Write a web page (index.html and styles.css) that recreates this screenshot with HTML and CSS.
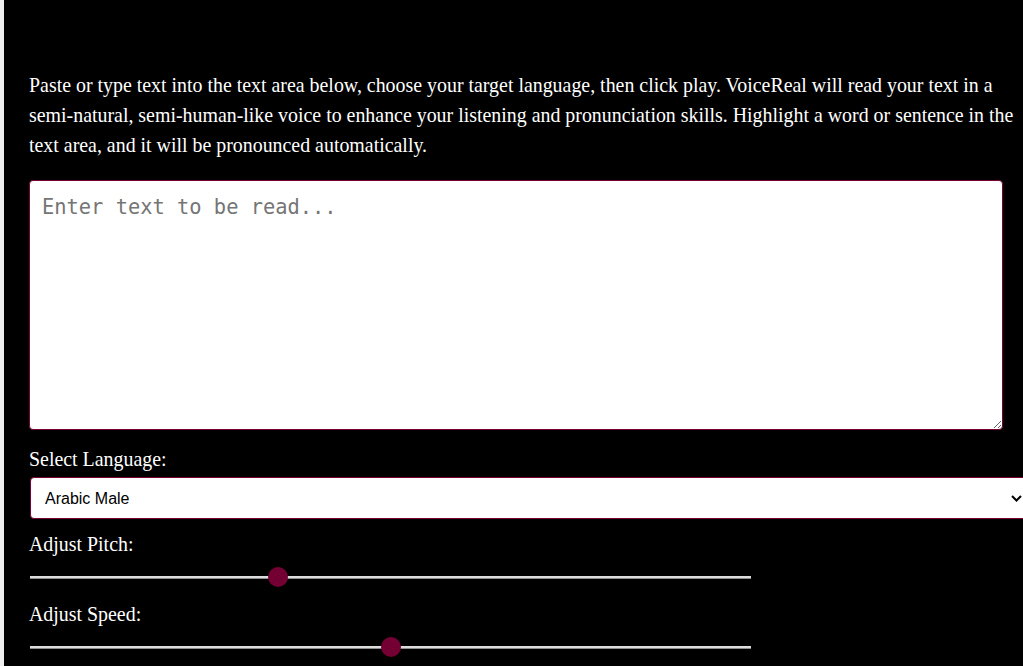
FILE: index.html
```html
<!DOCTYPE html>
<html lang="en">
<head>
<meta charset="utf-8">
<title>VoiceReal</title>
<link rel="stylesheet" href="styles.css">
</head>
<body>
<main class="page">
  <p class="intro">Paste or type text into the text area below, choose your target language, then click play. VoiceReal will read your text in a semi-natural, semi-human-like voice to enhance your listening and pronunciation skills. Highlight a word or sentence in the text area, and it will be pronounced automatically.</p>
  <textarea class="text-input" placeholder="Enter text to be read..."></textarea>
  <label class="field-label" for="lang">Select Language:</label>
  <div class="select-wrap">
    <select id="lang" class="lang-select">
      <option>Arabic Male</option>
      <option>Arabic Female</option>
    </select>
    <svg class="chevron" width="11" height="7" viewBox="0 0 11 7"><path d="M1 1 L5.5 5.5 L10 1" fill="none" stroke="#000" stroke-width="2"/></svg>
  </div>
  <label class="field-label" for="pitch">Adjust Pitch:</label>
  <input id="pitch" class="slider slider-pitch" type="range" min="0" max="100" value="34">
  <label class="field-label" for="speed">Adjust Speed:</label>
  <input id="speed" class="slider slider-speed" type="range" min="0" max="100" value="50">
</main>
</body>
</html>
```
FILE: styles.css
```css
html, body {
  margin: 0;
  padding: 0;
  height: 100%;
  overflow: hidden;
}
body {
  background: #f0f0f0;
}
.page {
  margin-left: 4px;
  width: 1040px;
  min-height: 100%;
  background: #000;
  padding: 70px 0 0 25px;
  box-sizing: border-box;
  font-family: "Liberation Serif", "Times New Roman", serif;
  color: #fff;
}
.intro {
  margin: 0 0 20px 0;
  width: 1000px;
  font-size: 19.9px;
  line-height: 30px;
}
.text-input {
  display: block;
  width: 974px;
  height: 250px;
  box-sizing: border-box;
  margin: 0 0 17px 0;
  padding: 14px 12px 12px 12px;
  border: 1px solid #7a0033;
  border-radius: 4px;
  background: #fff;
  font-family: "DejaVu Sans Mono", "Liberation Mono", monospace;
  font-size: 20.4px;
  line-height: 24px;
  resize: vertical;
  outline: none;
}
.text-input::placeholder {
  color: #757575;
}
.field-label {
  display: block;
  font-size: 19.9px;
  line-height: 24px;
}
.select-wrap {
  position: relative;
  width: 1003px;
  margin: 6px 0 13px 1px;
}
.lang-select {
  display: block;
  width: 100%;
  height: 42px;
  box-sizing: border-box;
  padding: 0 14px;
  border: 1px solid #7a0033;
  border-radius: 4px;
  background: #fff;
  color: #000;
  font-family: "Liberation Sans", Arial, sans-serif;
  font-size: 16px;
  -webkit-appearance: none;
  appearance: none;
  outline: none;
}
.chevron {
  position: absolute;
  right: 11px;
  top: 18px;
}
.slider {
  display: block;
  -webkit-appearance: none;
  appearance: none;
  width: 721px;
  height: 20px;
  margin: 11px 0 15px 1px;
  padding: 0;
  background: transparent;
}
.slider::-webkit-slider-runnable-track {
  height: 3px;
  background: linear-gradient(to bottom, #dcdcdc 0, #dcdcdc 66%, #8c8c8c 66%, #8c8c8c 100%);
  border: none;
}
.slider::-webkit-slider-thumb {
  -webkit-appearance: none;
  appearance: none;
  width: 20px;
  height: 20px;
  margin-top: -8.5px;
  border-radius: 50%;
  background: #740033;
  border: none;
}
```
